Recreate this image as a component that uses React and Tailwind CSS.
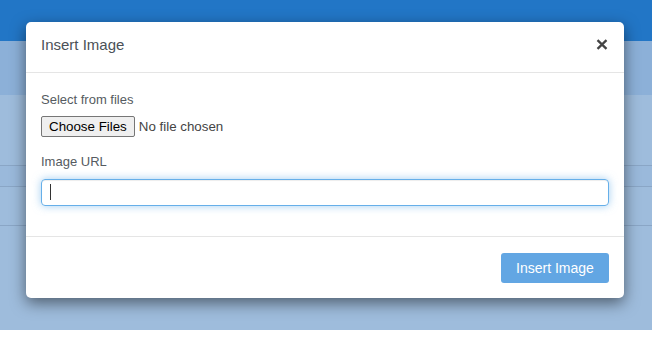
import React from 'react';

function CloseIcon() {
    return (
        <svg width="12" height="11" viewBox="0 0 12 11" fill="none">
            <path d="M1.5 1.2 L10.5 9.8 M10.5 1.2 L1.5 9.8" stroke="#444" strokeWidth="2.3" strokeLinecap="butt" />
        </svg>
    );
}

export default function App() {
    return (
        <div className="relative w-full h-[361px] bg-white font-['Liberation_Sans',Arial,sans-serif] overflow-hidden">
            {/* page behind the backdrop */}
            <div className="flex flex-col">
                <div className="h-[41px] bg-[#2276c6]" />
                <div className="h-[54px] bg-[#8cb0d8]" />
                <div className="h-[70px] bg-[#9ebcdc]" />
                <div className="h-[21px] bg-[#9ab9db] border-t border-[#8aa6c6]" />
                <div className="h-[39px] bg-[#9ebcdc] border-t border-[#8aa6c6]" />
                <div className="h-[105px] bg-[#9ebcdc] border-t border-[#8aa6c6]" />
            </div>

            {/* modal */}
            <div className="absolute left-[26px] top-[22px] w-[598px] bg-white rounded-[5px] shadow-[0_5px_15px_rgba(0,0,0,0.5)]">
                <div className="flex items-center justify-between pl-[15px] pr-[15px] pt-[12px] pb-[17px] border-b border-[#e5e5e5]">
                    <h4 className="text-[15px] leading-[21px] text-[#4b5157]">Insert Image</h4>
                    <button className="flex items-center justify-center w-[14px] h-[14px]">
                        <CloseIcon />
                    </button>
                </div>

                <div className="px-[15px] pt-[17px] pb-[30px] border-b border-[#e5e5e5]">
                    <label className="block text-[13px] leading-[20px] text-[#555b61] mb-[6px]">Select from files</label>
                    <input
                        type="file"
                        multiple
                        className="block h-[21px] text-[13.33px] leading-[19px] text-[#444] file:h-[21px] file:mr-[4px] file:px-[7px] file:border file:border-[#767676] file:rounded-[2px] file:bg-[#efefef] file:text-black"
                    />

                    <label className="block mt-[15px] text-[13px] leading-[20px] text-[#555b61] mb-[7px]">Image URL</label>
                    <div className="relative">
                        <input
                            type="text"
                            className="block w-full h-[27px] rounded-[4px] border border-[#66afe9] px-[8px] text-[13px] text-[#333] outline-none shadow-[inset_0_1px_1px_rgba(0,0,0,0.075),0_0_8px_rgba(102,175,233,0.6)]"
                        />
                        <span className="absolute left-[9px] top-[5px] w-px h-[16px] bg-[#333]" />
                    </div>
                </div>

                <div className="flex justify-end px-[15px] pt-[16px] pb-[15px]">
                    <button className="h-[30px] w-[108px] rounded-[3px] bg-[#62a6e3] text-white text-[14px] leading-[30px]">
                        Insert Image
                    </button>
                </div>
            </div>
        </div>
    );
}
